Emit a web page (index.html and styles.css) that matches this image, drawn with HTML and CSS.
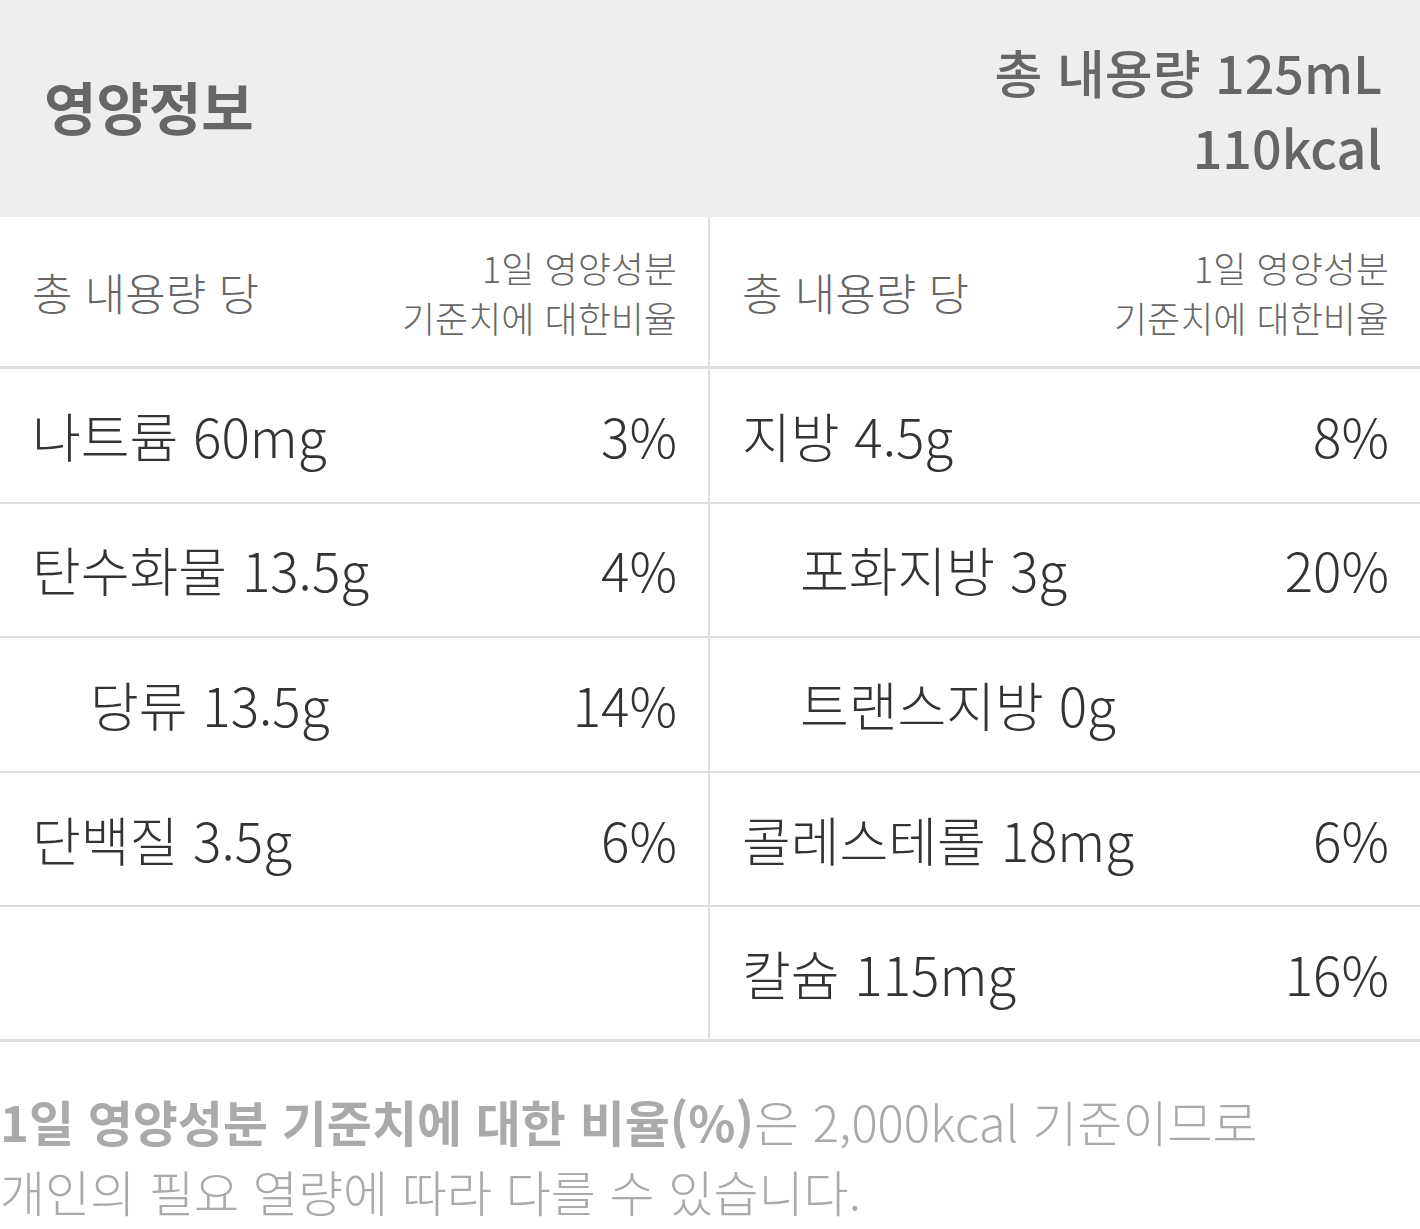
FILE: index.html
```html
<!DOCTYPE html>
<html lang="ko">
<head>
<meta charset="utf-8">
<title>영양정보</title>
<link rel="stylesheet" href="styles.css">
</head>
<body>
<section class="nutrition">
  <header class="summary">
    <h1 class="title">영양정보</h1>
    <div class="totals">
      <p class="total-line">총 내용량 125mL</p>
      <p class="total-line">110kcal</p>
    </div>
  </header>

  <div class="table">
    <div class="row head">
      <div class="cell">
        <span class="per">총 내용량 당</span>
        <span class="ratio">1일 영양성분<br>기준치에 대한비율</span>
      </div>
      <div class="cell">
        <span class="per">총 내용량 당</span>
        <span class="ratio">1일 영양성분<br>기준치에 대한비율</span>
      </div>
    </div>

    <div class="row">
      <div class="cell"><span class="name">나트륨 60mg</span><span class="pct">3%</span></div>
      <div class="cell"><span class="name">지방 4.5g</span><span class="pct">8%</span></div>
    </div>
    <div class="row">
      <div class="cell"><span class="name">탄수화물 13.5g</span><span class="pct">4%</span></div>
      <div class="cell"><span class="name sub">포화지방 3g</span><span class="pct">20%</span></div>
    </div>
    <div class="row">
      <div class="cell"><span class="name sub">당류 13.5g</span><span class="pct">14%</span></div>
      <div class="cell"><span class="name sub">트랜스지방 0g</span><span class="pct"></span></div>
    </div>
    <div class="row">
      <div class="cell"><span class="name">단백질 3.5g</span><span class="pct">6%</span></div>
      <div class="cell"><span class="name">콜레스테롤 18mg</span><span class="pct">6%</span></div>
    </div>
    <div class="row last">
      <div class="cell"></div>
      <div class="cell"><span class="name">칼슘 115mg</span><span class="pct">16%</span></div>
    </div>
  </div>

  <p class="note"><strong>1일 영양성분 기준치에 대한 비율(%)</strong>은 2,000kcal 기준이므로<br>개인의 필요 열량에 따라 다를 수 있습니다.</p>
</section>
</body>
</html>
```

FILE: styles.css
```css
* {
  box-sizing: border-box;
}

html, body {
  margin: 0;
  padding: 0;
  background: #ffffff;
}

body {
  font-family: "Noto Sans CJK KR", "Noto Sans", sans-serif;
  width: 1420px;
}

.nutrition {
  width: 1420px;
}

.summary {
  height: 217px;
  background: #eeeeee;
  display: flex;
  justify-content: space-between;
  align-items: center;
  padding: 0 38px 0 44px;
  color: #666666;
}

.title {
  margin: 0;
  font-size: 57px;
  font-weight: 700;
  line-height: 1;
  padding-bottom: 6px;
}

.totals {
  text-align: right;
  padding-top: 1px;
}

.total-line {
  margin: 0;
  font-size: 52px;
  font-weight: 500;
  line-height: 75px;
}

.table {
  display: flex;
  flex-direction: column;
}

.row {
  display: grid;
  grid-template-columns: 710px 710px;
  height: 134.6px;
}

.row.head {
  height: 152px;
}

.cell {
  display: flex;
  justify-content: space-between;
  align-items: center;
  padding: 0 31px 0 32px;
  border-bottom: 2px solid #dddddd;
}

.row.head .cell,
.row.last .cell {
  border-bottom-width: 3px;
}

.cell:first-child {
  border-right: 2px solid #dddddd;
}

.per {
  font-size: 44px;
  font-weight: 300;
  color: #666666;
  line-height: 1;
}

.ratio {
  font-size: 36px;
  font-weight: 300;
  color: #666666;
  line-height: 50px;
  text-align: right;
}

.name,
.pct {
  font-size: 53px;
  font-weight: 300;
  color: #333333;
  line-height: 1;
}

.name.sub {
  padding-left: 58px;
}

.note {
  margin: 44px 0 0;
  font-size: 49px;
  font-weight: 300;
  line-height: 70px;
  color: #aaaaaa;
}

.note strong {
  font-weight: 700;
}
```
